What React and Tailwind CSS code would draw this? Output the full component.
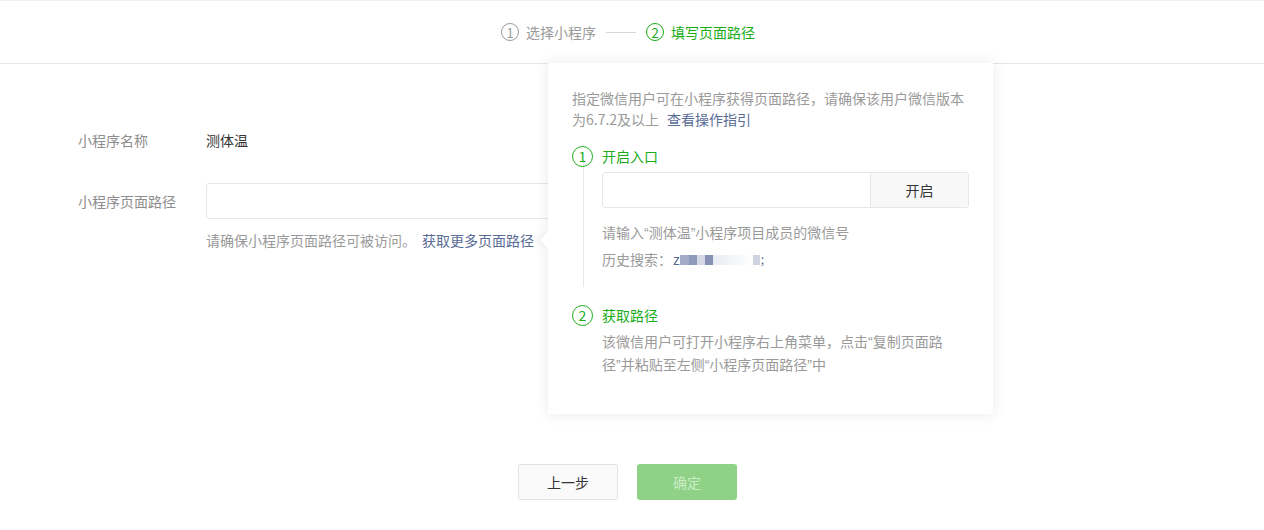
const FONT = { fontFamily: '"Noto Sans CJK SC", "Noto Sans", sans-serif' };

// 引号用西文字体，宽度更窄
const Q = ({ c }) => <span style={{ fontFamily: '"Liberation Sans", sans-serif' }}>{c}</span>;

const StepCircle = ({ n, active, size = 'sm' }) => (
  <span
    className={`inline-flex items-center justify-center rounded-full border leading-none ${
      size === 'lg' ? 'w-[21px] h-[21px] text-[14px]' : 'w-[18px] h-[18px] text-[13px]'
    } ${active ? 'border-[#1aad19] text-[#1aad19]' : 'border-[#9a9a9a] text-[#9a9a9a]'}`}
  >
    {n}
  </span>
);

const Blurred = () => (
  <span className="inline-flex items-center text-[#576b95]">
    z
    <span className="inline-block w-[9px] h-[10px] bg-[#a3abc6] mt-[2px]" />
    <span className="inline-block w-[8px] h-[10px] bg-[#8f99b9] mt-[2px]" />
    <span className="inline-block w-[8px] h-[10px] bg-[#d6d9e4] mt-[2px]" />
    <span className="inline-block w-[8px] h-[10px] bg-[#8791b3] mt-[2px]" />
    <span className="inline-block w-[40px] h-[10px] mt-[2px] bg-gradient-to-r from-[#e9ecf3] to-white" />
    <span className="inline-block w-[7px] h-[10px] bg-[#d0d4e0] mt-[2px]" />
    <span className="text-[12px] ml-[1px]">;</span>
  </span>
);

export default function App() {
  return (
    <div className="relative w-[1264px] h-[530px] bg-white overflow-hidden text-[14px]" style={FONT}>
      {/* 顶部步骤条 */}
      <div className="h-[64px] border-t border-t-[#efefef] border-b border-b-[#e4e6ea] flex items-center justify-center pr-[8px]">
        <div className="flex items-center text-[14px]">
          <StepCircle n="1" />
          <span className="ml-[7px] text-[#9a9a9a]">选择小程序</span>
          <span className="mx-[10px] w-[30px] h-px bg-[#d5d5d5]" />
          <StepCircle n="2" active />
          <span className="ml-[7px] text-[#1aad19]">填写页面路径</span>
        </div>
      </div>

      {/* 表单 */}
      <div className="pl-[78px] pt-[64px]">
        <div className="flex items-center h-[24px]">
          <span className="w-[128px] text-[#8d8d8d]">小程序名称</span>
          <span className="text-[#353535]">测体温</span>
        </div>
        <div className="flex items-start mt-[31px]">
          <span className="w-[128px] text-[#8d8d8d] leading-[36px]">小程序页面路径</span>
          <div>
            <div className="w-[440px] h-[36px] border border-[#e4e6ea] rounded-[3px]" />
            <div className="mt-[10px] text-[#9a9a9a] leading-[22px]">
              请确保小程序页面路径可被访问。
              <span className="ml-[6px] text-[#576b95]">获取更多页面路径</span>
            </div>
          </div>
        </div>
      </div>

      {/* 底部按钮 */}
      <div className="absolute left-0 right-0 top-[464px] flex justify-center gap-[19px] pr-[9px]">
        <button className="w-[100px] h-[36px] rounded-[3px] border border-[#e2e3e6] bg-[#fafafa] text-[#353535] text-[14px]">
          上一步
        </button>
        <button className="w-[100px] h-[36px] rounded-[3px] bg-[#8ed187] text-[#c9ecc4] text-[14px]">
          确定
        </button>
      </div>

      {/* 弹出提示 */}
      <div className="absolute left-[548px] top-[63px] w-[445px] h-[351px] bg-white shadow-[0_0_14px_rgba(0,0,0,0.09)]">
        <span className="absolute left-[-6px] top-[171px] w-[12px] h-[12px] bg-white rotate-45 shadow-[-3px_3px_5px_rgba(0,0,0,0.05)]" />
        <div className="relative bg-white px-[24px] pt-[25px]">
          <p className="text-[#9a9a9a] leading-[21px]">
            指定微信用户可在小程序获得页面路径，请确保该用户微信版本为6.7.2及以上
            <span className="ml-[8px] text-[#576b95]">查看操作指引</span>
          </p>

          <div className="mt-[14px] flex items-center h-[24px]">
            <StepCircle n="1" active size="lg" />
            <span className="ml-[9px] text-[#1aad19]">开启入口</span>
          </div>
          <div className="ml-[11px] mt-[-8px] border-l border-[#e4e6ea] pl-[18px] pt-[12px] h-[127px]">
            <div className="flex w-[367px] h-[36px] border border-[#e4e6ea] rounded-[3px]">
              <div className="flex-1" />
              <div className="w-[98px] border-l border-[#e4e6ea] bg-[#f8f8f8] flex items-center justify-center text-[#353535]">
                开启
              </div>
            </div>
            <p className="mt-[13px] text-[#9a9a9a] leading-[22px]">
              请输入<Q c="“" />测体温<Q c="”" />小程序项目成员的微信号
            </p>
            <p className="mt-[4px] text-[#9a9a9a] leading-[22px] flex items-center">
              历史搜索：
              <span className="ml-[1px]">
                <Blurred />
              </span>
            </p>
          </div>

          <div className="mt-[16px] flex items-center h-[24px]">
            <StepCircle n="2" active size="lg" />
            <span className="ml-[9px] text-[#1aad19]">获取路径</span>
          </div>
          <p className="ml-[30px] mt-[3px] w-[350px] text-[#9a9a9a] leading-[22px]">
            该微信用户可打开小程序右上角菜单，点击<Q c="“" />复制页面路径<Q c="”" />并粘贴至左侧<Q c="“" />小程序页面路径<Q c="”" />中
          </p>
        </div>
      </div>
    </div>
  );
}
